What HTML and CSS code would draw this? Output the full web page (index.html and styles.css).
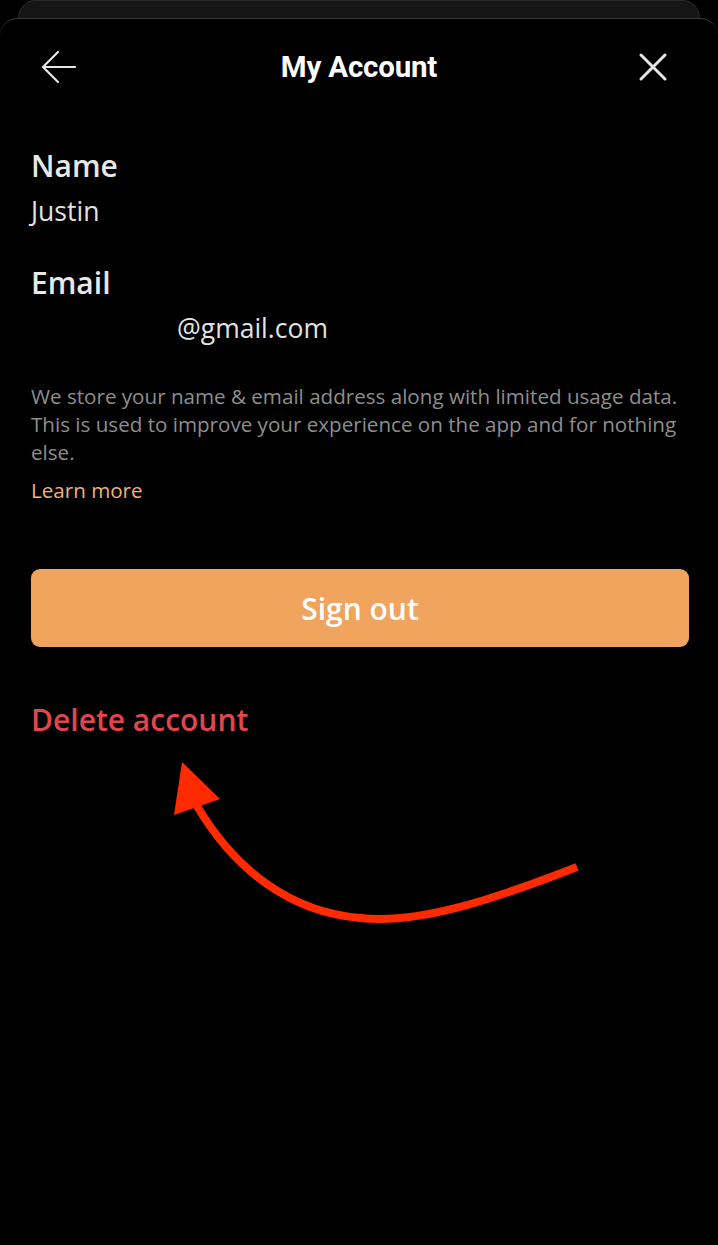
FILE: index.html
```html
<!DOCTYPE html>
<html>
<head>
<meta charset="utf-8"/>
<meta name="viewport" content="width=device-width, initial-scale=1.0" />
<link rel="stylesheet" href="styles.css">
</head>
<body>

<div class="backcard"></div>

<div class="sheet">

<div class="topbar">
  <button class="iconbtn back" aria-label="Back">
    <svg width="36" height="36" viewBox="0 0 36 36"><path d="M34 18H3M17 3L2 18l15 15" fill="none" stroke="#e6e6e6" stroke-width="2.2" stroke-linecap="round" stroke-linejoin="round"/></svg>
  </button>
  <h1>My Account</h1>
  <button class="iconbtn close" aria-label="Close">
    <svg width="36" height="36" viewBox="0 0 36 36"><path d="M6 6l24 24M30 6L6 30" fill="none" stroke="#e6e6e6" stroke-width="3" stroke-linecap="round"/></svg>
  </button>
</div>

<div class="content">
  <h2>Name</h2>
  <p class="value">Justin</p>

  <h2 class="second">Email</h2>
  <p class="value"><span class="redacted"></span>@gmail.com</p>

  <p class="note">We store your name &amp; email address along with limited usage data. This is used to improve your experience on the app and for nothing else.</p>
  <a class="learn" href="#">Learn more</a>

  <button class="signout">Sign out</button>

  <a class="delete" href="#">Delete account</a>
</div>

</div>

<!-- annotation arrow drawn on top of the screenshot -->
<svg class="callout" width="718" height="1245" viewBox="0 0 718 1245">
  <path d="M577 867C500 897 420 925 360 918C290 912 235 870 197 806" fill="none" stroke="#ff2a00" stroke-width="8"/>
  <polygon points="182,762 174,815 220,799" fill="#ff2a00"/>
</svg>

</body>
</html>
```

FILE: styles.css
```css
body {
  margin: 0;
  padding: 0;
  background: #000;
  font-family: "Open Sans", "Noto Sans", sans-serif;
  color: #e8e8e8;
  height: 1245px;
  overflow: hidden;
}

.backcard {
  height: 18px;
  margin: 0 18px;
  background: #151515;
  border: 1px solid #2a2a2a;
  border-bottom: 0;
  border-radius: 18px 18px 0 0;
  box-sizing: border-box;
}

.sheet {
  background: #000;
  border-top: 1px solid #3a3a3a;
  border-radius: 18px 18px 0 0;
  height: 1227px;
  box-sizing: border-box;
}

.topbar {
  display: grid;
  grid-template-columns: 120px 1fr 120px;
  align-items: center;
  height: 95px;
}

.topbar h1 {
  margin: 0;
  text-align: center;
  font-family: Roboto, "Liberation Sans", sans-serif;
  font-weight: bold;
  font-size: 29.5px;
  color: #fff;
  letter-spacing: -0.2px;
}

.iconbtn {
  background: none;
  border: 0;
  padding: 0;
  width: 36px;
  height: 36px;
  display: flex;
}

.iconbtn.back {
  margin-left: 41px;
}

.iconbtn.close {
  justify-self: end;
  margin-right: 47px;
}

.content {
  padding: 32px 30px 0 31px;
  display: flex;
  flex-direction: column;
  align-items: flex-start;
}

.content h2 {
  margin: 0;
  font-size: 30px;
  font-weight: 600;
  line-height: 40px;
  color: #e8e8e8;
}

.content h2.second {
  margin-top: 35px;
}

.content .value {
  margin: 8px 0 0;
  font-size: 26.5px;
  line-height: 34px;
  color: #e2e2e2;
}

.redacted {
  display: inline-block;
  width: 146px;
}

.note {
  margin: 37px 0 0;
  font-size: 20.6px;
  line-height: 28px;
  color: #8e8e8e;
}

.learn {
  margin-top: 10px;
  font-size: 20.6px;
  line-height: 28px;
  color: #f2b07c;
  text-decoration: none;
}

.signout {
  margin-top: 65px;
  width: 658px;
  height: 78px;
  border: 0;
  border-radius: 9px;
  background: #f0a45e;
  color: #fff;
  font-family: "Open Sans", sans-serif;
  font-weight: 600;
  font-size: 30px;
}

.delete {
  margin-top: 53px;
  font-size: 30px;
  font-weight: 600;
  line-height: 40px;
  color: #e0474c;
  text-decoration: none;
}

.callout {
  position: absolute;
  left: 0;
  top: 0;
  pointer-events: none;
}
```
